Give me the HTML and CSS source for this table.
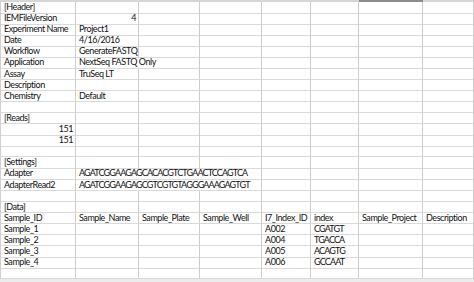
FILE: index.html
```html
<!DOCTYPE html>
<html>
<head>
<meta charset="utf-8">
<link rel="stylesheet" href="styles.css">
</head>
<body>
<div class="sheet">
  <div class="head"><span></span><span></span><span></span><span></span><span></span><span></span><span class="sel"></span><span></span></div>
  <div class="row"><span>[Header]</span><span></span><span></span><span></span><span></span><span></span><span></span><span></span></div>
  <div class="row"><span>IEMFileVersion</span><span class="num">4</span><span></span><span></span><span></span><span></span><span></span><span></span></div>
  <div class="row"><span>Experiment Name</span><span>Project1</span><span></span><span></span><span></span><span></span><span></span><span></span></div>
  <div class="row"><span>Date</span><span>4/16/2016</span><span></span><span></span><span></span><span></span><span></span><span></span></div>
  <div class="row"><span>Workflow</span><span>GenerateFASTQ</span><span></span><span></span><span></span><span></span><span></span><span></span></div>
  <div class="row"><span>Application</span><span class="span2">NextSeq FASTQ Only</span><span></span><span></span><span></span><span></span><span></span></div>
  <div class="row"><span>Assay</span><span>TruSeq LT</span><span></span><span></span><span></span><span></span><span></span><span></span></div>
  <div class="row"><span>Description</span><span></span><span></span><span></span><span></span><span></span><span></span><span></span></div>
  <div class="row"><span>Chemistry</span><span>Default</span><span></span><span></span><span></span><span></span><span></span><span></span></div>
  <div class="row"><span></span><span></span><span></span><span></span><span></span><span></span><span></span><span></span></div>
  <div class="row"><span>[Reads]</span><span></span><span></span><span></span><span></span><span></span><span></span><span></span></div>
  <div class="row"><span class="num">151</span><span></span><span></span><span></span><span></span><span></span><span></span><span></span></div>
  <div class="row"><span class="num">151</span><span></span><span></span><span></span><span></span><span></span><span></span><span></span></div>
  <div class="row"><span></span><span></span><span></span><span></span><span></span><span></span><span></span><span></span></div>
  <div class="row"><span>[Settings]</span><span></span><span></span><span></span><span></span><span></span><span></span><span></span></div>
  <div class="row"><span>Adapter</span><span class="span3 seq">AGATCGGAAGAGCACACGTCTGAACTCCAGTCA</span><span></span><span></span><span></span><span></span></div>
  <div class="row"><span>AdapterRead2</span><span class="span3 seq">AGATCGGAAGAGCGTCGTGTAGGGAAAGAGTGT</span><span></span><span></span><span></span><span></span></div>
  <div class="row"><span></span><span></span><span></span><span></span><span></span><span></span><span></span><span></span></div>
  <div class="row"><span>[Data]</span><span></span><span></span><span></span><span></span><span></span><span></span><span></span></div>
  <div class="row"><span>Sample_ID</span><span>Sample_Name</span><span>Sample_Plate</span><span>Sample_Well</span><span>I7_Index_ID</span><span>index</span><span>Sample_Project</span><span>Description</span></div>
  <div class="row"><span>Sample_1</span><span></span><span></span><span></span><span>A002</span><span class="seq">CGATGT</span><span></span><span></span></div>
  <div class="row"><span>Sample_2</span><span></span><span></span><span></span><span>A004</span><span class="seq">TGACCA</span><span></span><span></span></div>
  <div class="row"><span>Sample_3</span><span></span><span></span><span></span><span>A005</span><span class="seq">ACAGTG</span><span></span><span></span></div>
  <div class="row"><span>Sample_4</span><span></span><span></span><span></span><span>A006</span><span class="seq">GCCAAT</span><span></span><span></span></div>
  <div class="row"><span></span><span></span><span></span><span></span><span></span><span></span><span></span><span></span></div>
</div>
</body>
</html>
```
FILE: styles.css
```css
html, body {
  margin: 0;
  padding: 0;
}
body {
  background: #ececec;
  width: 474px;
  height: 282px;
  overflow: hidden;
  font-family: Lato, "Noto Sans", sans-serif;
  font-size: 9px;
  letter-spacing: -0.45px;
  color: #111;
}
.sheet {
  background: #fff;
}
.head,
.row {
  display: grid;
  grid-template-columns: 76px 63px 61px 62px 49px 48px 64px 51px;
}
.head {
  height: 2px;
}
.head > span {
  background: #d6d6d6;
}
.head > .sel {
  background: #8c8c8c;
}
.row {
  height: 11.1px;
}
.row > span {
  box-sizing: border-box;
  border-right: 1px solid #cdcdcd;
  border-bottom: 1px solid #dadada;
  padding: 0 2px 0 3px;
  line-height: 10.5px;
  white-space: nowrap;
}
.row > span:first-child {
  border-left: 1px solid #d0d0d0;
}
.row > .num {
  text-align: right;
}
.row > .seq {
  letter-spacing: -0.85px;
}
.row > .span2 {
  grid-column: span 2;
}
.row > .span3 {
  grid-column: span 3;
}
```
